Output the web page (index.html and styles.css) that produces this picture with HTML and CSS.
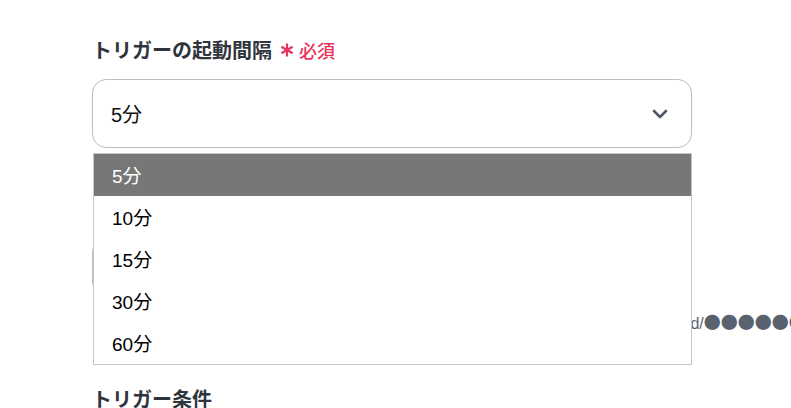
FILE: index.html
```html
<!DOCTYPE html>
<html lang="ja">
<head>
    <meta charset="UTF-8" />
    <meta name="viewport" content="width=device-width, initial-scale=1.0" />
    <title>トリガー設定</title>
    <link rel="stylesheet" href="styles.css">
</head>
<body>
    <div id="form">
        <div class="field">
            <div class="label">
                トリガーの起動間隔
                <span class="req">
                    <svg class="star" width="14" height="14" viewBox="0 0 14 14">
                        <path d="M7 0.5 V13.5 M1.4 3.75 L12.6 10.25 M1.4 10.25 L12.6 3.75" stroke="#e8335d" stroke-width="2.2" />
                    </svg>
                    必須
                </span>
            </div>
            <div class="select-wrap">
                <div class="select">
                    <span>5分</span>
                    <svg class="chevron" width="16" height="10" viewBox="0 0 16 10">
                        <path d="M2 2 L8 8 L14 2" fill="none" stroke="#4f5766" stroke-width="2.6" stroke-linecap="round" stroke-linejoin="round" />
                    </svg>
                </div>

                <ul class="options">
                    <li class="active">5分</li>
                    <li>10分</li>
                    <li>15分</li>
                    <li>30分</li>
                    <li>60分</li>
                </ul>
            </div>
        </div>

        <div class="field">
            <div class="label">スプレッドシートID</div>
            <div class="input"></div>
            <div class="hint">例）対象となるスプレッドシートのURLが「https://docs.google.com/spreadsheets/d/<span class="dots">●●●●●●●●</span>/edit」の場合</div>
        </div>

        <div class="field">
            <div class="label">トリガー条件</div>
        </div>
    </div>
</body>
</html>
```

FILE: styles.css
```css
body {
    margin: 0;
    padding: 0;
    background: #fff;
    font-family: "Liberation Sans", "Noto Sans CJK JP", sans-serif;
    color: #222;
    overflow: hidden;
}

#form {
    width: 600px;
    padding: 36px 0 40px 92px;
    display: flex;
    flex-direction: column;
    gap: 51px;
}

.label {
    display: flex;
    align-items: center;
    font-family: "Noto Sans CJK JP", sans-serif;
    font-size: 20px;
    font-weight: bold;
    line-height: 28px;
    color: #30353d;
    margin-bottom: 15px;
}

.req {
    display: flex;
    align-items: center;
    gap: 5px;
    margin-left: 8px;
    color: #e8335d;
    font-size: 18px;
    font-weight: 500;
}

.select-wrap {
    position: relative;
}

.select {
    box-sizing: border-box;
    height: 69px;
    border: 1px solid #b9bfc8;
    border-radius: 14px;
    display: flex;
    align-items: center;
    justify-content: space-between;
    padding: 0 23px 0 18px;
    font-size: 20px;
    color: #111;
}

.options {
    position: absolute;
    top: 74px;
    left: 1px;
    right: 0;
    margin: 0;
    padding: 0;
    list-style: none;
    background: #fff;
    border: 1px solid #c6c6c6;
    z-index: 2;
}

.options li {
    height: 42px;
    line-height: 46px;
    overflow: hidden;
    padding-left: 18px;
    font-size: 19px;
    color: #000;
}

.options li.active {
    background: #777;
    color: #fff;
}

.input {
    box-sizing: border-box;
    height: 50px;
    border: 1px solid #b9bfc8;
    border-radius: 10px;
}

.hint {
    margin-top: 20px;
    padding-left: 5px;
    font-size: 16px;
    line-height: 20px;
    color: #5a6270;
    white-space: nowrap;
}

.dots {
    font-family: "Noto Sans CJK JP", sans-serif;
    font-size: 17px;
}
```
